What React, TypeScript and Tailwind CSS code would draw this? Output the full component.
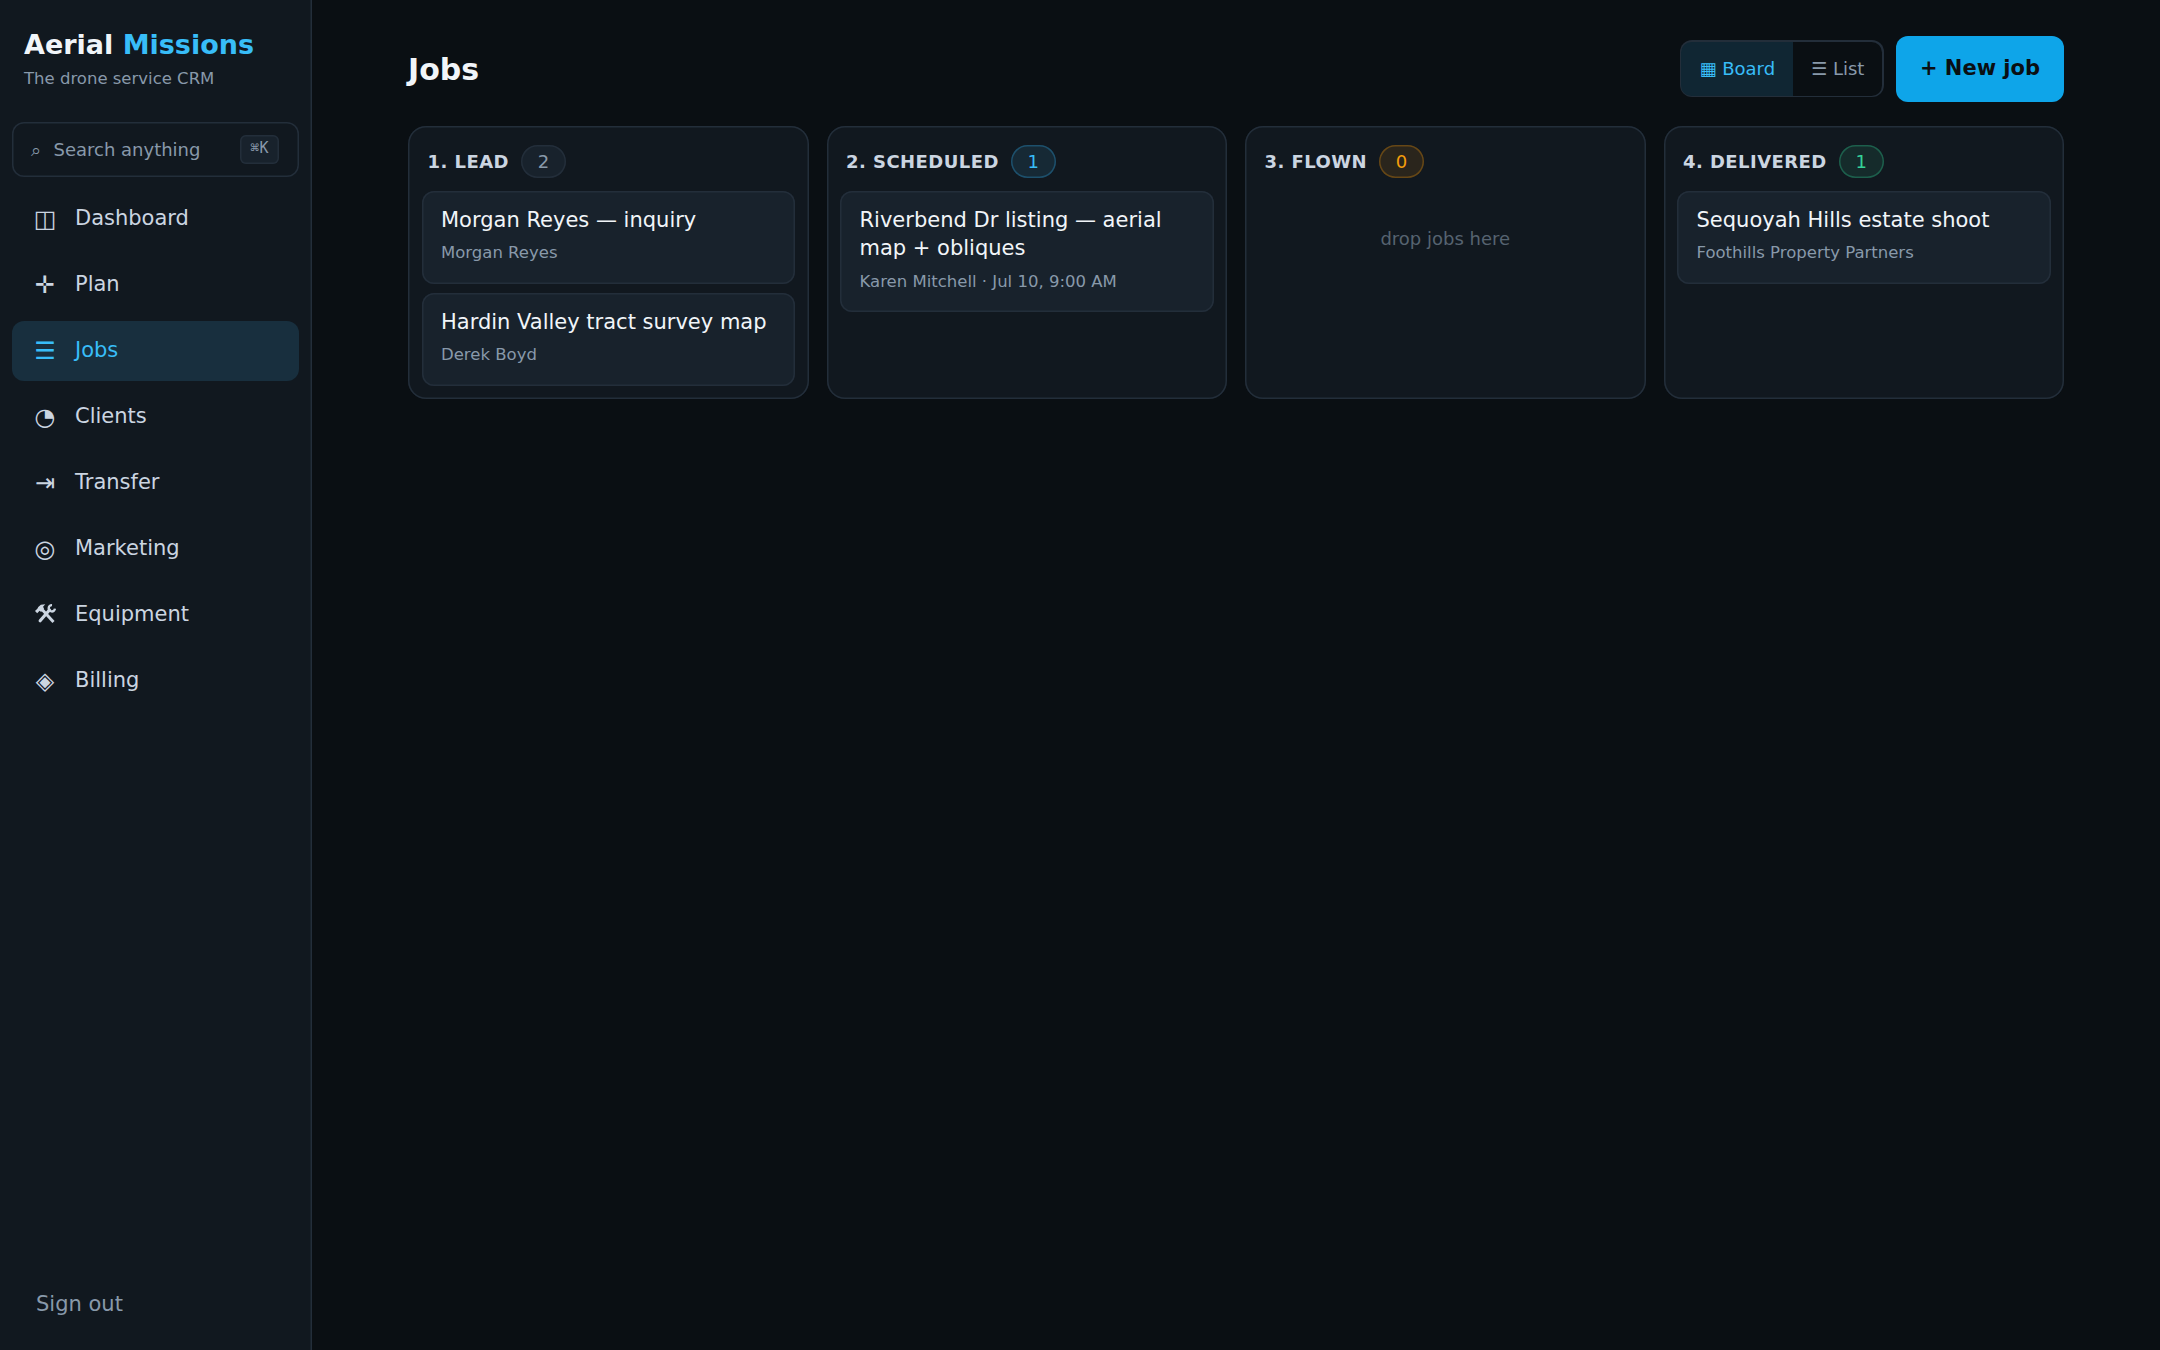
import type { ReactNode } from "react";

type Job = { title: string; meta: string };
type Column = { name: string; tone: string; jobs: Job[] };
type NavItem = { icon: ReactNode; label: string; active?: boolean };

function ToolsIcon() {
  return (
    <svg viewBox="0 0 20 19" className="mx-auto -mt-0.5 h-5 w-[21px]" fill="none" stroke="currentColor">
      <path d="M7 5.4 17.6 17.2" strokeWidth="2.8" />
      <path d="M13.8 5.6 4.9 16" strokeWidth="3" strokeLinecap="round" />
      <path d="M16.2 1.1A3 3 0 1 0 19 4.4" strokeWidth="2.2" />
      <path
        d="M0 6.7 2.4 4.2 3.1 2.8 5.6.6 9.8.3 7.7 2.6 8.6 4.6 5.8 7.6 4.4 6.5 2.1 8.9Z"
        fill="currentColor"
        stroke="none"
      />
    </svg>
  );
}

const nav: NavItem[] = [
  { icon: "◫", label: "Dashboard" },
  { icon: "✛", label: "Plan" },
  { icon: "☰", label: "Jobs", active: true },
  { icon: "◔", label: "Clients" },
  { icon: "⇥", label: "Transfer" },
  { icon: "◎", label: "Marketing" },
  { icon: <ToolsIcon />, label: "Equipment" },
  { icon: "◈", label: "Billing" },
];

const columns: Column[] = [
  {
    name: "1. LEAD",
    tone: "shadow-[inset_0_0_0_1.5px_#232e3a] bg-[#18222c] text-[#8899aa]",
    jobs: [
      { title: "Morgan Reyes — inquiry", meta: "Morgan Reyes" },
      { title: "Hardin Valley tract survey map", meta: "Derek Boyd" },
    ],
  },
  {
    name: "2. SCHEDULED",
    tone: "shadow-[inset_0_0_0_1.5px_#1d506c] bg-[#162935] text-[#38bdf8]",
    jobs: [
      {
        title: "Riverbend Dr listing — aerial map + obliques",
        meta: "Karen Mitchell · Jul 10, 9:00 AM",
      },
    ],
  },
  {
    name: "3. FLOWN",
    tone: "shadow-[inset_0_0_0_1.5px_#664716] bg-[#2a251c] text-[#f59e0b]",
    jobs: [],
  },
  {
    name: "4. DELIVERED",
    tone: "shadow-[inset_0_0_0_1.5px_#1d5f4c] bg-[#152b2b] text-[#34d399]",
    jobs: [{ title: "Sequoyah Hills estate shoot", meta: "Foothills Property Partners" }],
  },
];

function Sidebar() {
  return (
    <aside className="flex w-[312px] shrink-0 flex-col bg-[#11181f] pr-[13.5px] pl-3 shadow-[inset_-1.5px_0_0_#232e3a]">
      <div className="px-3 pt-6">
        <div className="text-[27px] leading-[41px] font-bold text-[#f1f5f9]">
          Aerial <span className="text-[#38bdf8]">Missions</span>
        </div>
        <div className="pt-px text-[16.5px] leading-[25px] text-[#8899aa]">The drone service CRM</div>
      </div>
      <button className="mt-[31px] flex h-[55px] items-center rounded-xl pr-[19.5px] pl-[19px] text-left text-[18px] text-[#8899aa] shadow-[inset_0_0_0_1.5px_#232e3a]">
        <span className="w-[22.5px]">⌕</span>
        <span className="flex-1">Search anything</span>
        <kbd className="flex h-[28.5px] w-[39px] justify-center rounded-md bg-[#18222c] pt-[1.5px] font-['DejaVu_Sans_Mono'] text-[15px] leading-[23px] shadow-[inset_0_0_0_1.5px_#232e3a]">
          ⌘K
        </kbd>
      </button>
      <nav className="mt-3 flex flex-col gap-1.5">
        {nav.map((item) => (
          <a
            key={item.label}
            className={
              item.active
                ? "flex h-[60px] items-center gap-[15px] rounded-xl bg-[#182f3e] px-[18px] text-[#38bdf8]"
                : "flex h-[60px] items-center gap-[15px] rounded-xl px-[18px] text-[#cbd5e1]"
            }
          >
            <span className="w-[30px] text-center text-[24px] leading-[36px]">{item.icon}</span>
            <span className="pb-0.5 text-[21px] leading-[30px]">{item.label}</span>
          </a>
        ))}
      </nav>
      <button className="mt-auto mb-[30px] px-6 text-left text-[21px] leading-[32px] text-[#8899aa]">
        Sign out
      </button>
    </aside>
  );
}

function JobCard({ job }: { job: Job }) {
  return (
    <article className="rounded-xl bg-[#18222c] px-[19.5px] pt-[15px] pb-[18px] shadow-[inset_0_0_0_1.5px_#232e3a]">
      <h3 className="text-[21px] leading-[28.5px] text-[#f1f5f9]">{job.title}</h3>
      <p className="mt-[6.75px] text-[16.5px] leading-[24.75px] text-[#8899aa]">{job.meta}</p>
    </article>
  );
}

function BoardColumn({ column }: { column: Column }) {
  return (
    <section className="flex flex-col rounded-[18px] bg-[#11181f] p-[13.5px] shadow-[inset_0_0_0_1.5px_#232e3a]">
      <header className="flex h-[51.25px] items-center gap-3 px-1.5 pb-[7px]">
        <h2 className="text-[18px] leading-[27px] font-bold tracking-wide text-[#cbd5e1]">{column.name}</h2>
        <span
          className={`flex h-[33px] w-[45px] items-center justify-center rounded-full text-[18px] leading-[27px] ${column.tone}`}
        >
          {column.jobs.length}
        </span>
      </header>
      <div className="flex flex-col gap-[9px]">
        {column.jobs.map((job) => (
          <JobCard key={job.title} job={job} />
        ))}
        {column.jobs.length === 0 && (
          <p className="pt-[34px] text-center text-[18px] leading-[27px] text-[#566370]">drop jobs here</p>
        )}
      </div>
    </section>
  );
}

export default function App() {
  return (
    <div className="flex h-[1350px] bg-[#0a0f13] font-['DejaVu_Sans',sans-serif]">
      <Sidebar />
      <main className="min-w-0 flex-1 px-24 pt-9">
        <div className="flex h-[66px] items-center justify-between">
          <h1 className="pt-px text-[30px] leading-[45px] font-bold text-[#f1f5f9]">Jobs</h1>
          <div className="flex items-center gap-3">
            <div className="mb-px flex h-[57px] rounded-xl bg-[#232e3a] p-[1.5px] text-[18px] leading-[27px]">
              <button className="rounded-l-[10.5px] bg-[#102633] px-[18px] pb-px text-[#38bdf8]">▦ Board</button>
              <button className="rounded-r-[10.5px] bg-[#0a0f13] px-[18px] pb-px text-[#8899aa]">☰ List</button>
            </div>
            <button className="h-[66px] rounded-xl bg-[#0ea5e9] px-6 text-[21px] font-bold text-[#0a0f13]">
              + New job
            </button>
          </div>
        </div>
        <div className="mt-6 grid grid-cols-4 gap-[18px]">
          {columns.map((column) => (
            <BoardColumn key={column.name} column={column} />
          ))}
        </div>
      </main>
    </div>
  );
}
